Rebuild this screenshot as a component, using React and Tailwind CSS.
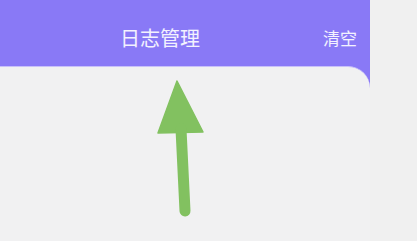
export default function App() {
  return (
    <div className="w-[417px] h-[241px] flex bg-[#f0f0f0] overflow-hidden" style={{ fontFamily: '"Noto Sans CJK SC", "Noto Sans", sans-serif' }}>
      <div className="w-[370px] h-full flex flex-col bg-[#8979f6]">
        <div className="h-[66px] flex items-center relative shrink-0">
          <div className="absolute left-[120px] top-[25px] text-[20px] leading-[26px] text-white/90">日志管理</div>
          <div className="absolute left-[323px] top-[27px] text-[17px] leading-[22px] text-white/90">清空</div>
        </div>
        <div className="flex-1 bg-[#f1f1f2] rounded-tr-[22px] border-t border-[#c8c0fa] relative">
          <svg className="absolute left-0 top-0" width="370" height="175" viewBox="0 66 370 175">
            <polygon points="177,80 158,132 203,131" fill="#82c160" stroke="#82c160" strokeWidth="1.5" strokeLinejoin="round" />
            <line x1="181" y1="128" x2="185" y2="210" stroke="#82c160" strokeWidth="11" strokeLinecap="round" />
          </svg>
        </div>
      </div>
    </div>
  );
}
